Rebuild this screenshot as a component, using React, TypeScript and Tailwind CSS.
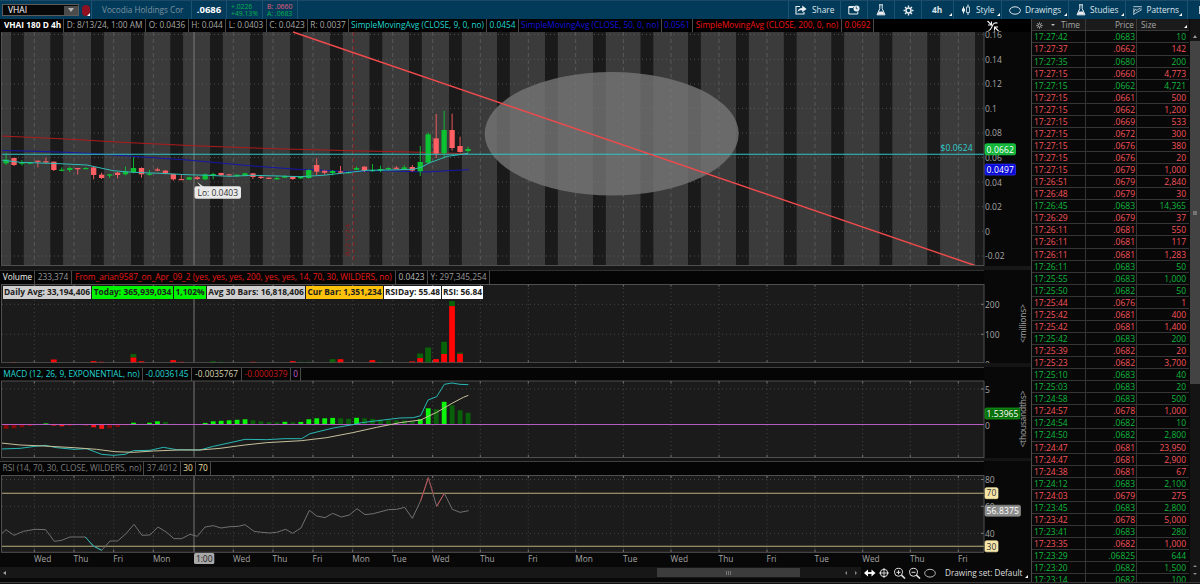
import React from 'react'

const BANDS = [11, 50.3, 91, 131, 170.3, 210, 250, 290, 330, 369.5, 409, 449, 497, 545, 593, 640.5, 688, 736, 783.8, 831.3, 879.5, 927.3, 975]
const DAYS: [number, string][] = [
  [34.3, 'Wed'], [74, 'Thu'], [113.7, 'Fri'], [153.3, 'Mon'], [233.3, 'Wed'], [273, 'Thu'], [313, 'Fri'],
  [352.7, 'Mon'], [392.7, 'Tue'], [432.7, 'Wed'], [480.3, 'Thu'], [528.3, 'Fri'], [575.7, 'Mon'], [623.4, 'Tue'],
  [671, 'Wed'], [719, 'Thu'], [767, 'Fri'], [815, 'Tue'], [862.7, 'Wed'], [910.3, 'Thu'], [958.3, 'Fri'],
]
const UP = '#0cc232'
const DOWN = '#ff5f62'
const barX = (i: number) => 6 + 7.965 * i

// color, body top, body bottom, high, low (thirds of a pixel below y = 110)
const CANDLES: [string, number, number, number, number][] = [
  ['g', 149, 160, 130, 165], ['r', 144, 165, 144, 168], ['g', 158, 161, 150, 167], ['g', 156, 161, 156, 163],
  ['r', 152, 155, 152, 172], ['r', 154, 157, 143, 160], ['r', 155, 180, 155, 183], ['g', 179, 182, 172, 184],
  ['g', 174, 180, 170, 186], ['r', 174, 177, 174, 194], ['g', 174, 177, 172, 178], ['r', 172, 195, 172, 208],
  ['r', 194, 204, 188, 207], ['g', 193, 197, 192, 204], ['r', 188, 195, 186, 205], ['g', 185, 193, 170, 196],
  ['g', 174, 186, 142, 190], ['r', 174, 193, 172, 203], ['g', 191, 194, 180, 197], ['r', 178, 182, 173, 184],
  ['r', 182, 191, 180, 193], ['r', 192, 208, 191, 212], ['r', 207, 210, 195, 210], ['g', 202, 209, 200, 210],
  ['r', 202, 207, 198, 210], ['g', 193, 208, 190, 211], ['g', 192, 196, 188, 208], ['r', 189, 196, 188, 198],
  ['r', 193, 195, 193, 195], ['g', 194, 199, 193, 200], ['g', 190, 197, 188, 199], ['r', 190, 201, 190, 207],
  ['r', 200, 204, 195, 207], ['r', 203, 206, 203, 206], ['g', 204, 208, 198, 209], ['g', 198, 203, 196, 204],
  ['r', 200, 207, 198, 210], ['g', 200, 205, 199, 207], ['g', 180, 204, 178, 206], ['r', 165, 185, 145, 195],
  ['r', 182, 188, 182, 194], ['g', 183, 189, 180, 196], ['r', 184, 188, 168, 190], ['g', 186, 190, 184, 190],
  ['g', 174, 179, 169, 180], ['r', 170, 183, 168, 186], ['g', 180, 183, 162, 185], ['g', 177, 182, 167, 187],
  ['g', 174, 177, 172, 180], ['r', 173, 176, 168, 177], ['g', 172, 177, 166, 180], ['r', 171, 182, 165, 185],
  ['g', 156, 184, 108, 198], ['g', 73, 158, 67, 160], ['r', 85, 131, 12, 144], ['g', 60, 130, 2, 146],
  ['r', 60, 114, 11, 122], ['r', 108, 126, 80, 128], ['g', 117, 123, 110, 128],
]

// bar index, red height, green height
const VOLUME: [number, number, number][] = [
  [1, 0.8, 0], [6, 3.3, 0], [7, 0, 0.5], [11, 1.7, 0], [12, 1, 0], [16, 5.3, 3.4], [17, 1.5, 0], [21, 2.7, 0], [22, 1, 0],
  [26, 0, 1.5], [27, 0, 1], [31, 1, 0], [36, 1.7, 0], [37, 0, 1], [38, 0, 1], [41, 0, 3.6], [42, 3.6, 0], [46, 2.7, 0],
  [47, 0, 1], [51, 1.4, 0], [52, 4.7, 4.6], [53, 0, 15.3], [54, 3.7, 0], [55, 8.8, 12.2], [56, 56.7, 5], [57, 9, 1.3],
]

const MACD_BARS = [
  -4.5, -4, -3, -1.7, -0.7, 0.9, -1.3, -2, -1.5, -0.7, -1, -3, -4.5, -4, -2.7, -1, 1.6, 0.6, 1.6, 3, 2.4, 0.5, -0.7, 0, -0.5,
  1.4, 3, 3.5, 4, 4.5, 5, 4, 3, 2.3, 2, 2.5, 2, 2.4, 5, 6, 6, 6.4, 6, 5.5, 6.5, 6, 5.5, 4.6, 4, 4, 4, 3, 5, 16, 15, 22.5, 19, 14, 11.5,
]

const TRADES: [string, string, string, boolean][] = [
  ['17:27:42', '.0683', '10', true], ['17:27:37', '.0662', '142', false], ['17:27:35', '.0680', '200', true],
  ['17:27:15', '.0660', '4,773', false], ['17:27:15', '.0662', '4,721', true], ['17:27:15', '.0661', '500', false],
  ['17:27:15', '.0662', '1,200', false], ['17:27:15', '.0669', '533', false], ['17:27:15', '.0672', '300', false],
  ['17:27:15', '.0676', '380', false], ['17:27:15', '.0676', '20', false], ['17:27:15', '.0679', '1,000', false],
  ['17:26:51', '.0679', '2,840', false], ['17:26:48', '.0679', '30', false], ['17:26:45', '.0683', '14,365', true],
  ['17:26:29', '.0679', '37', false], ['17:26:11', '.0681', '550', false], ['17:26:11', '.0681', '117', false],
  ['17:26:11', '.0681', '1,283', false], ['17:26:11', '.0683', '50', true], ['17:25:55', '.0683', '1,000', true],
  ['17:25:50', '.0682', '50', true], ['17:25:44', '.0676', '1', false], ['17:25:42', '.0681', '400', false],
  ['17:25:42', '.0681', '1,400', false], ['17:25:42', '.0683', '200', true], ['17:25:39', '.0682', '20', false],
  ['17:25:23', '.0682', '3,700', false], ['17:25:10', '.0683', '40', true], ['17:25:03', '.0683', '20', true],
  ['17:24:58', '.0683', '500', true], ['17:24:57', '.0678', '1,000', false], ['17:24:54', '.0682', '10', true],
  ['17:24:50', '.0682', '2,800', true], ['17:24:47', '.0681', '23,950', false], ['17:24:47', '.0681', '2,900', false],
  ['17:24:38', '.0681', '67', false], ['17:24:12', '.0683', '2,100', true], ['17:24:03', '.0679', '275', false],
  ['17:23:45', '.0683', '2,800', true], ['17:23:42', '.0678', '5,000', false], ['17:23:41', '.0683', '280', true],
  ['17:23:35', '.0682', '1,000', false], ['17:23:29', '.06825', '644', true], ['17:23:20', '.0682', '1,500', true],
  ['17:23:14', '.0682', '100', true],
]

interface ILine {
  points: string;
  color: string;
  width?: number;
}

// points are kept at three units per pixel
const Line: React.FC<ILine> = ({ points, color, width = 1 }) => (
  <polyline points={points} fill="none" stroke={color} strokeWidth={width * 3} strokeLinejoin="round" />
)

interface ICell {
  w: string;
  text: string;
  color: string;
}

const Cell: React.FC<ICell> = ({ w, text, color }) => (
  <div className={`flex h-full shrink-0 items-center justify-center whitespace-nowrap border-r border-[#4a4a4a] ${w} ${color}`}>
    <span>{text}</span>
  </div>
)

const Grid: React.FC<{ top: number, bottom: number, rows: number[] }> = ({ top, bottom, rows }) => (
  <g stroke="#6a6a6a" strokeOpacity="0.5" strokeWidth="1">
    {DAYS.map(([x]) => <path key={x} d={`M${x} ${top}V${bottom}`} strokeDasharray="1 3" />)}
    {rows.map((y) => <path key={y} d={`M2 ${y}H984`} strokeDasharray="1 3" />)}
    {DAYS.map(([x]) => <path key={x} d={`M${x} ${top}v2.5M${x} ${bottom}v-2.5`} stroke="#777" strokeOpacity="1" />)}
    {rows.map((y) => <path key={y} d={`M981 ${y}h3`} stroke="#777" strokeOpacity="1" />)}
  </g>
)

interface IChip {
  y: number;
  w: number;
  text: string;
  fill: string;
  stroke?: string;
  color: string;
}

const Chip: React.FC<IChip> = ({ y, w, text, fill, stroke, color }) => (
  <g>
    <rect x="985" y={y - 5.5} width={w} height="11" rx="1.5" fill={fill} stroke={stroke || fill} strokeWidth="0.7" />
    <text x="986.6" y={y + 3.2} textLength={w - 3.2} fill={color}>{text}</text>
  </g>
)

const Corner = () => <span className="mb-[3px] ml-auto mr-px self-end border-b-[3px] border-l-[3px] border-b-white border-l-transparent" />

const Flask = () => (
  <svg className="h-3 w-[10px]" viewBox="0 0 10 12" fill="none" stroke="#e8eef2">
    <path d="M3 .8h4M3.8 1v3.6L1 10.8h8L6.2 4.600V1" strokeWidth="1" />
    <path d="M2.900 7.400h4.200L8.500 10.500h-7z" fill="#e8eef2" stroke="none" />
  </svg>
)

const Gear: React.FC<{ cls: string, color: string }> = ({ cls, color }) => (
  <svg className={cls} viewBox="0 0 12 12" fill="none" stroke={color}>
    <circle cx="6" cy="6" r="2.7" strokeWidth="1.6" />
    <path d="M6 .6v2M6 9.400v2M.6 6h2M9.400 6h2M2.200 2.200l1.400 1.400M8.400 8.400l1.400 1.400M2.200 9.800l1.400-1.400M8.400 3.600l1.400-1.400" strokeWidth="1.500" />
  </svg>
)

const Oval = () => (
  <svg className="h-[9px] w-3" viewBox="0 0 12 9" fill="none" stroke="#dfe6ea"><ellipse cx="6" cy="4.500" rx="5.400" ry="3.700" /></svg>
)

const TopBar: React.FC = () => {
  return (
    <div className="flex h-[19px] shrink-0 items-stretch border-t border-[#1c4a66] bg-[#023b5a] text-[9px] text-[#dde6ec]">
      <div className="flex w-[92px] shrink-0 items-center border-r border-[#1d5273] pl-[2px]">
        <div className="flex h-[12px] w-[77px] items-center justify-between border border-[#5b5b5b] bg-[#080808] pl-[5px] text-[8.5px] text-white">
          <span>VHAI</span>
          <span className="flex h-[9px] w-[14px] items-center justify-center bg-[#4b4b4b]">
            <span className="border-x-[3px] border-t-[4px] border-x-transparent border-t-[#b5b5b5]" />
          </span>
        </div>
        <span className="ml-[3px] flex h-[11px] w-2 rounded-sm bg-[#8f1020]"><span className="ml-auto mt-auto border-b-[3px] border-l-[3px] border-b-white border-l-transparent" /></span>
      </div>
      <div className="flex w-[100px] shrink-0 items-center whitespace-nowrap border-r border-[#1d5273] pl-[10px] text-[8.2px] text-[#7d919f]">Vocodia Holdings Cor</div>
      <div className="flex w-[35px] shrink-0 items-center justify-center border-r border-[#1d5273] text-[9.5px] font-bold text-white">.0686</div>
      <div className="flex w-9 shrink-0 flex-col justify-center border-r border-[#1d5273] pl-1 text-[6.8px] leading-[7px] text-[#08b04c]">
        <span>+.0226</span>
        <span>+49.13%</span>
      </div>
      <div className="flex w-[35px] shrink-0 flex-col justify-center border-r border-[#1d5273] pl-1 text-[6.8px] leading-[7px]">
        <span className="text-[#e2607f]">B: .0660</span>
        <span className="text-[#08b04c]">A: .0683</span>
      </div>
      <div className="ml-auto flex w-[412px] shrink-0 items-stretch text-[8.3px]">
        <div className="flex w-[53px] items-center gap-[5px] border-x border-[#1d5273] pl-[6px]">
          <svg className="h-[10px] w-3" viewBox="0 0 12 10" fill="none" stroke="#e8eef2">
            <path d="M5 1.500H1v7.500h8V7" strokeWidth="1.100" />
            <path d="M2.600 7c.3-2.600 2-3.900 4.600-4V.6L11.600 4 7.200 7.300V5.200C5.200 5 3.800 5.500 2.600 7z" fill="#e8eef2" stroke="none" />
          </svg>
          <span>Share</span>
        </div>
        <div className="flex w-[27px] items-center justify-center border-r border-[#1d5273]">
          <svg className="h-[10px] w-3" viewBox="0 0 12 10" fill="none" stroke="#e8eef2">
            <path d="M6 1.500H.8v7.500h9V6.500M.8 2.500H5" />
            <circle cx="8.500" cy="3.500" r="3" fill="#e8eef2" stroke="none" />
            <path d="M8.300 1.500v2.300h1.400" stroke="#023b5a" strokeWidth=".7" />
          </svg>
        </div>
        <div className="flex w-[27px] items-center justify-center border-r border-[#1d5273]"><Flask /></div>
        <div className="flex w-[27px] items-center justify-center border-r border-[#1d5273]"><Gear cls="size-[11px]" color="#e8eef2" /></div>
        <div className="flex w-8 items-center border-r border-[#1d5273] pl-[10px] font-bold">4h<Corner /></div>
        <div className="flex w-[48px] items-center border-r border-[#1d5273] pl-[7px]">
          <svg className="mr-[5px] h-3 w-[10px]" viewBox="0 0 10 12" fill="none" stroke="#e8eef2">
            <path d="M2.500 2.500v7M7 .5v10.500" />
            <path d="M1 4.500h3v3H1z" fill="#e8eef2" stroke="none" />
            <path d="M5.500 3h3v5.500h-3z" fill="#023b5a" strokeWidth=".8" />
          </svg>
          Style<Corner />
        </div>
        <div className="flex w-[67px] items-center border-r border-[#1d5273] pl-[7px]"><Oval /><span className="ml-1">Drawings</span><Corner /></div>
        <div className="flex w-[57px] items-center border-r border-[#1d5273] pl-[7px]"><Flask /><span className="ml-1">Studies</span><Corner /></div>
        <div className="flex w-[62px] items-center border-r border-[#1d5273] pl-[7px] pr-[4px]">
          <svg className="h-[11px] w-[11px]" viewBox="0 0 11 11" fill="none" stroke="#e8eef2">
            <path d="M.3 1h10M.3 10.200L10.300 4.500M1 6.800L2.800 4l2 1.500L7 3l1.500 1 1.500-1.300M1 3v7" strokeWidth=".9" />
          </svg>
          <span className="ml-1">Patterns</span><Corner />
        </div>
        <div className="flex flex-1 items-center justify-end"><span className="h-2 w-px bg-[#c0ccd4]" /></div>
      </div>
    </div>
  )
}

const PriceChart: React.FC = () => (
  <svg className="block h-[234px] w-[1030px] shrink-0 overflow-visible" viewBox="0 32 1030 234" fontSize="8.500">
    <rect x="1" y="32" width="983" height="234" fill="#3b3b3b" />
    {BANDS.map((x) => <rect key={x} x={x} y="32" width={x > 970 ? 9 : 12.8} height="234" fill="#1a1a1a" />)}
    <g stroke="#5c5c5c" strokeWidth="1">
      {DAYS.map(([x]) => <path key={x} d={`M${x} 32V266`} strokeDasharray="4 3" strokeOpacity=".9" />)}
      {[34.5, 59.3, 84, 108.400, 133, 157.500, 182, 206.600, 231.300, 256].map((y) => <path key={y} d={`M2 ${y}H984`} strokeDasharray="1 3" strokeOpacity=".8" />)}
    </g>
    <path d="M194 32V266" stroke="#7a7a7a" />
    <path d="M353.800 32V262" stroke="#8c191c" strokeDasharray="4 3" />
    <text transform="translate(350 256) rotate(-90)" fill="#8c191c" fontSize="8" textLength="32">8/21/24</text>
    <g fill="none">
      <polyline points="1,136 60,138.700 130,142.700 200,146 273,148.700 350,150.700 423,152.300 468,153.700" stroke="#b01a1c" />
      <polyline points="1,150.300 67,152.300 110,154.700 147,157.300 187,160 217,162.700 253,166 300,169.500 317,170 347,171.700 380,170.700 427,172 447,170.700 469,169.700" stroke="#1616ac" />
    </g>
    {CANDLES.map(([c, t, b, h, l], i) => (
      <g key={i} fill={c === 'g' ? UP : DOWN}>
        <rect x={barX(i) - 0.4} y={110 + h / 3} width="0.9" height={(l - h) / 3} />
        <rect x={barX(i) - 2.600} y={110 + t / 3} width="5.300" height={Math.max(1.200, (b - t) / 3)} />
      </g>
    ))}
    <polyline points="1,160 20,162.300 60,163.700 87,165 113,170.700 133,172.300 160,173.300 187,174.700 207,175.300 230,176.300 253,175.300 280,176 300,176.700 323,175.300 347,172.700 367,170.300 390,170 413,169.300 421,167.300 430,162.700 440,159 447,156.300 460,154.700 468,153.300" fill="none" stroke="#2fbcb6" />
    <ellipse cx="611.700" cy="133.700" rx="127" ry="61.700" fill="#797979" fillOpacity=".77" />
    <path d="M1 154.300H984" stroke="#2fc3c5" strokeWidth="1.100" />
    <path d="M293 32L976.500 266" stroke="#f04a4c" strokeWidth="1.400" />
    <path d="M1.500 32V266M984 32V266M1 265.500H984" stroke="#505050" fill="none" />
    <text x="940.500" y="150.800" fill="#2cd0d0" textLength="32">$0.0624</text>
    <path d="M197 182l4 5h3z" fill="#e8e8e8" />
    <rect x="194.500" y="186.200" width="46.500" height="12.500" rx="2" fill="#e9e9e9" />
    <text x="197.500" y="196.200" fill="#333" textLength="40.500">Lo: 0.0403</text>
    <g fill="#a5a5a5">
      {['0.16', '0.14', '0.12', '0.1', '0.08', '0.06', '0.04', '0.02', '0', '-0.02'].map((t, i) => (
        <text key={t} x="985" y={38 + 24.600 * i}>{t}</text>
      ))}
    </g>
    <Chip y={149.300} w={30.500} text="0.0662" fill="#12b53a" stroke="#1fdc4c" color="#fff" />
    <Chip y={169.600} w={30.500} text="0.0497" fill="#0a0ad8" stroke="#3a3aff" color="#fff" />
  </svg>
)

const VolumeChart: React.FC = () => (
  <div className="relative h-[79px] shrink-0">
    <svg className="block h-[79px] w-[1030px]" viewBox="0 284 1030 79" fontSize="8.500">
      <rect x="1" y="284" width="983" height="79" fill="#1b1b1b" />
      <Grid top={284} bottom={363} rows={[304.300, 334.300]} />
      <path d="M194 284V363" stroke="#777" />
      {VOLUME.map(([i, r, g]) => (
        <g key={i}>
          <rect x={barX(i) - 2.900} y={362.800 - r - g} width="5.800" height={g} fill="#096309" />
          <rect x={barX(i) - 2.900} y={362.800 - r} width="5.800" height={r} fill="#ff0505" />
        </g>
      ))}
      <path d="M1.500 284V363M984 284V363M1 284.500H984M1 362.700H984" stroke="#505050" />
      <g fill="#a5a5a5">
        <text x="985" y="308">200</text>
        <text x="985" y="338">100</text>
        <text x="985" y="367.500">0</text>
        <text transform="translate(1026 343) rotate(-90)" textLength="39">{'<millions>'}</text>
      </g>
    </svg>
    <div className="absolute left-[3px] top-[2px] flex h-[13px] items-stretch gap-px text-[8.4px] font-bold text-[#202020]">
      <span className="flex w-[88px] items-center justify-center whitespace-nowrap bg-[#cfcfcf]">Daily Avg: 33,194,406</span>
      <span className="flex w-[81px] items-center justify-center whitespace-nowrap bg-[#00f400]">Today: 365,939,034</span>
      <span className="flex w-[32px] items-center justify-center whitespace-nowrap bg-[#00f400]">1,102%</span>
      <span className="flex w-[98px] items-center justify-center whitespace-nowrap bg-[#cfcfcf]">Avg 30 Bars: 16,818,406</span>
      <span className="flex w-[77px] items-center justify-center whitespace-nowrap bg-[#ffc20a]">Cur Bar: 1,351,234</span>
      <span className="flex w-[57px] items-center justify-center whitespace-nowrap bg-white">RSIDay: 55.48</span>
      <span className="flex w-[41px] items-center justify-center whitespace-nowrap bg-white">RSI: 56.84</span>
    </div>
  </div>
)

const macdColor = (i: number) => {
  const v = MACD_BARS[i]
  const prev = i ? MACD_BARS[i - 1] : -5
  if (v > 0) return v > prev || i === 40 ? '#0bf50b' : '#086008'
  return v < prev ? '#ff1414' : '#850808'
}

const MacdChart: React.FC = () => (
  <svg className="block h-[77px] w-[1030px] shrink-0 overflow-visible" viewBox="0 381 1030 77" fontSize="8.500">
    <rect x="1" y="381" width="983" height="77" fill="#1b1b1b" />
    <Grid top={381} bottom={457.500} rows={[389]} />
    <path d="M194 381V458" stroke="#777" />
    {MACD_BARS.map((v, i) => (
      <rect key={i} x={barX(i) - 2.300} y={v > 0 ? 424.300 - v : 424.300} width="4.800" height={Math.abs(v)} fill={macdColor(i)} />
    ))}
    <path d="M1 424.500H984" stroke="#b45cc0" />
    <g transform="translate(0 370) scale(.33333)">
      <Line color="#27b8b4" points="3,237 60,235 105,229 135,226 170,233 222,238 260,236 305,253 341,256 375,253 400,242 450,241 490,232 530,239 600,240 640,229 700,216 735,208 800,209 855,206 905,206 930,191 1000,174 1058,164 1085,158 1150,150 1200,144 1240,143 1262,137 1284,90 1310,80 1333,43 1356,39 1380,43 1405,44" />
      <Line color="#c8c19c" points="3,219 60,225 130,228 222,233 290,238 345,245 400,247 460,243 540,240 600,240 660,235 735,225 800,218 905,212 980,203 1058,188 1130,172 1200,158 1262,150 1310,127 1356,100 1390,82 1405,76" />
    </g>
    <path d="M1.500 381V458M984 381V458M1 381H984M1 457.500H984" stroke="#505050" />
    <g fill="#a5a5a5">
      <text x="985" y="392.500">5</text>
      <text x="985" y="428.500">0</text>
      <text transform="translate(1026 447.500) rotate(-90)" textLength="57">{'<thousandths>'}</text>
    </g>
    <Chip y={413.500} w={35} text="1.53965" fill="#087008" stroke="#1aa81a" color="#fff" />
  </svg>
)

const RsiChart: React.FC = () => (
  <svg className="block h-[92px] w-[1030px] shrink-0" viewBox="0 475 1030 92" fontSize="8.500">
    <rect x="1" y="475" width="983" height="77.500" fill="#1b1b1b" />
    <Grid top={475.500} bottom={552} rows={[479.500, 506.300, 533.300]} />
    <path d="M194 475V552" stroke="#777" />
    <path d="M1 493.200H984M1 546.300H984" stroke="#b9ad7e" strokeWidth="1.100" />
    <g transform="translate(0 480) scale(.33333)">
      <Line color="#707070" points="3,163 18,149 42,166 70,154 105,148 137,149 163,184 185,181 210,171 256,171 280,198 305,211 330,183 353,183 378,161 402,133 426,166 450,165 474,141 500,157 522,176 545,176 570,163 592,169 615,141 640,137 663,144 690,140 715,139 735,134 762,154 785,157 810,159 830,157 857,148 878,160 903,144 928,91 950,108 975,113 998,100 1024,111 1048,105 1071,86 1095,104 1120,101 1165,89 1190,88 1214,82 1237,115 1262,62 1285,-7 1310,79 1333,40 1357,88 1380,97 1406,92" />
      <Line color="#27b5b0" points="256,171 280,198 305,211" />
      <Line color="#c04c50" points="1262,62 1285,-7" />
      <Line color="#a04448" points="1285,-7 1301,45" />
      <Line color="#c04c50" points="1310,79 1333,40" />
    </g>
    <path d="M1.500 475V552M984 475V552M1 475.500H984M1 552.300H984" stroke="#505050" />
    <g fill="#a5a5a5">
      <text x="985" y="483.300">80</text>
      <text x="985" y="509.700">60</text>
      <text x="985" y="537">40</text>
      {DAYS.map(([x, d]) => <text key={x} x={x - 0.4} y="562.300" fontSize="8.300">{d}</text>)}
    </g>
    <rect x="194" y="553" width="20.300" height="11" rx="1.500" fill="#a8a8a8" />
    <text x="196" y="562" fill="#222" textLength="16.500">1:00</text>
    <Chip y={493.200} w={13} text="70" fill="#f6e6a8" color="#333" />
    <Chip y={510.700} w={35.500} text="56.8375" fill="#8c8c8c" color="#fff" />
    <Chip y={546.300} w={13} text="30" fill="#f6e6a8" color="#333" />
  </svg>
)

const BottomBar: React.FC = () => (
  <div className="flex h-[11px] shrink-0 items-center text-[8.2px] text-[#dedede]">
    <div className="flex h-full w-[861px] items-center bg-[#171717] pl-[3px]">
      <span className="border-y-[2.5px] border-r-[3px] border-y-transparent border-r-[#a0a0a0]" />
      <div className="ml-[651px] flex h-[9px] w-[143px] items-center justify-center gap-px bg-[#3c3c3c]">
        <span className="h-1 w-px bg-[#777]" /><span className="h-1 w-px bg-[#777]" /><span className="h-1 w-px bg-[#777]" />
      </div>
      <span className="ml-[45px] border-y-[2px] border-r-[2.5px] border-y-transparent border-r-[#888]" />
      <span className="ml-2 border-y-[2px] border-l-[2.5px] border-y-transparent border-l-[#888]" />
    </div>
    <svg className="ml-[2px] h-3 w-[75px] shrink-0" viewBox="862 0 75 12" fill="none" stroke="#e2e2e2">
      <path d="M865 6h8" strokeWidth="2" />
      <path d="M863 6l4-3.500v7zM874.500 6l-4-3.500v7z" fill="#fff" stroke="none" />
      <circle cx="883" cy="6" r="3.700" />
      <path d="M883 1v10M878 6h10" strokeWidth=".9" />
      <circle cx="897.500" cy="5.300" r="4" /><path d="M900.400 8.200l3.600 3.300" strokeWidth="1.600" /><path d="M895.500 5.300h4M897.500 3.300v4" />
      <circle cx="912.500" cy="5.300" r="4" /><path d="M915.400 8.200l3.600 3.300" strokeWidth="1.600" /><path d="M910.500 5.300h4" />
      <ellipse cx="929" cy="6.200" rx="5.300" ry="3.900" stroke="#b5b5b5" />
    </svg>
    <span className="ml-[7px] mt-px whitespace-nowrap">Drawing set: Default</span>
    <span className="ml-auto mr-[3px] self-end border-b-[3px] border-l-[3px] border-b-white border-l-transparent" />
  </div>
)

const TimeSales: React.FC = () => {
  return (
    <div className="flex min-w-0 flex-1 overflow-hidden border-l border-[#4a4a4a] bg-[#080808]">
      <div className="w-[157px] shrink-0 text-[8.5px]">
        <div className="flex h-[12.4px] items-center border-b border-[#3a3a3a] bg-[#1b1b1b] text-[8.3px] text-[#a5a5a5]">
          <div className="flex w-[53px] items-center pl-1 pt-px">
            <Gear cls="size-[7px]" color="#bbb" />
            <span className="ml-2 border-x-[2px] border-t-[2.500px] border-x-transparent border-t-[#bbb]" />
            <span className="ml-[6px]">Time</span>
          </div>
          <div className="w-[52px] border-x border-[#3a3a3a] pr-[2px] pt-px text-right">Price</div>
          <div className="flex flex-1 items-center self-stretch pl-[4px] pt-px">Size<span className="mb-[2px] ml-auto mr-[2px] self-end border-b-[3px] border-l-[3px] border-b-white border-l-transparent" /></div>
        </div>
        {TRADES.map(([time, price, size, up], i) => (
          <div key={i} className={`flex h-[12.07px] items-stretch border-b border-[#353535] leading-[11.5px] ${up ? 'text-[#10b83e]' : 'text-[#f4545b]'}`}>
            <div className="w-[53px] pl-[2px]">{time}</div>
            <div className="w-[52px] border-x border-[#353535] pr-px text-right">{price}</div>
            <div className="flex-1 pr-[3px] text-right">{size}</div>
          </div>
        ))}
      </div>
      <div className="ml-px flex flex-1 flex-col items-center bg-[#141414]">
        <span className="mt-[16px] border-x-[2px] border-b-[3px] border-x-transparent border-b-[#999]" />
        <div className="mt-[3px] flex h-[343px] w-full items-center justify-center bg-[#434343]"><span className="size-1 bg-[#757575]" /></div>
        <span className="mt-[181px] border-x-[2px] border-b-[2.500px] border-x-transparent border-b-[#888]" />
        <span className="mt-[6px] border-x-[2px] border-t-[2.500px] border-x-transparent border-t-[#888]" />
      </div>
    </div>
  )
}

export default function App() {
  return (
    <div className="flex h-[584px] w-[1200px] flex-col overflow-hidden bg-[#080808] font-['Open_Sans','Noto_Sans',sans-serif]">
      <TopBar />
      <div className="flex h-[563px] shrink-0">
        <div className="flex w-[1031px] shrink-0 flex-col text-[8.3px]">
          <div className="flex h-[13px] shrink-0 items-center bg-black pl-[2px]">
            <Cell w="w-[62px] font-bold" text="VHAI 180 D 4h" color="text-white" />
            <Cell w="w-[82px]" text="D: 8/13/24, 1:00 AM" color="text-[#a8a8a8]" />
            <Cell w="w-[43px]" text="O: 0.0436" color="text-[#a8a8a8]" />
            <Cell w="w-[37px]" text="H: 0.044" color="text-[#a8a8a8]" />
            <Cell w="w-[41px]" text="L: 0.0403" color="text-[#a8a8a8]" />
            <Cell w="w-[41px]" text="C: 0.0423" color="text-[#a8a8a8]" />
            <Cell w="w-[41px]" text="R: 0.0037" color="text-[#a8a8a8]" />
            <Cell w="w-[138px]" text="SimpleMovingAvg (CLOSE, 9, 0, no)" color="text-[#22d6d2]" />
            <Cell w="w-[32px]" text="0.0454" color="text-[#22d6d2]" />
            <Cell w="w-[143px]" text="SimpleMovingAvg (CLOSE, 50, 0, no)" color="text-[#1414dc]" />
            <Cell w="w-[31px]" text="0.0561" color="text-[#1414dc]" />
            <Cell w="w-[149px]" text="SimpleMovingAvg (CLOSE, 200, 0, no)" color="text-[#ee1414]" />
            <Cell w="w-[32px]" text="0.0692" color="text-[#ee1414]" />
            <svg className="ml-auto mr-[32px] h-3 w-[12px]" viewBox="0 0 12 12" fill="none" stroke="#f5f5f5">
              <path d="M.5 1l3.500 3.500M11.500 11L8 7.500M4.500 1.500V5H1M7.500 10.500V7H11M1.500 10.500c2.500 0 2.500-2 3.700-4.500S7 2.500 10.500 3" strokeWidth="1.100" />
            </svg>
          </div>
          <PriceChart />
          <div className="h-[4px] shrink-0 bg-[#171717]" />
          <div className="flex h-[14px] w-[984px] shrink-0 items-center border-t border-[#303030] bg-[#050505] pl-px">
            <Cell w="w-[34px]" text="Volume" color="text-[#efefef]" />
            <Cell w="w-[37px]" text="233,374" color="text-[#979797]" />
            <Cell w="w-[324px]" text="From_arian9587_on_Apr_09_2 (yes, yes, yes, 200, yes, yes, 14, 70, 30, WILDERS, no)" color="text-[#e81818]" />
            <Cell w="w-[32px]" text="0.0423" color="text-[#b5b5b5]" />
            <Cell w="w-[62px]" text="Y: 297,345,254" color="text-[#979797]" />
          </div>
          <VolumeChart />
          <div className="h-[4px] shrink-0 bg-[#141414]" />
          <div className="flex h-[14px] w-[984px] shrink-0 items-center border-t border-[#404040] bg-[#050505] pl-px">
            <Cell w="w-[142px]" text="MACD (12, 26, 9, EXPONENTIAL, no)" color="text-[#22d6d2]" />
            <Cell w="w-[49px]" text="-0.0036145" color="text-[#22d6d2]" />
            <Cell w="w-[50px]" text="-0.0035767" color="text-[#d9d2ae]" />
            <Cell w="w-[49px]" text="-0.0000379" color="text-[#c81818]" />
            <Cell w="w-[10px]" text="0" color="text-[#c25cd0]" />
          </div>
          <MacdChart />
          <div className="h-[3px] shrink-0 bg-[#141414]" />
          <div className="flex h-[14px] w-[984px] shrink-0 items-center border-t border-[#404040] bg-[#050505] pl-px">
            <Cell w="w-[143px]" text="RSI (14, 70, 30, CLOSE, WILDERS, no)" color="text-[#7c7c7c]" />
            <Cell w="w-[37px]" text="37.4012" color="text-[#7c7c7c]" />
            <Cell w="w-[15px]" text="30" color="text-[#eadf9f]" />
            <Cell w="w-[15px]" text="70" color="text-[#eadf9f]" />
          </div>
          <RsiChart />
          <BottomBar />
        </div>
        <TimeSales />
      </div>
      <div className="h-[2px] shrink-0 border-t border-[#3a3a3a] bg-[#111]" />
    </div>
  )
}
